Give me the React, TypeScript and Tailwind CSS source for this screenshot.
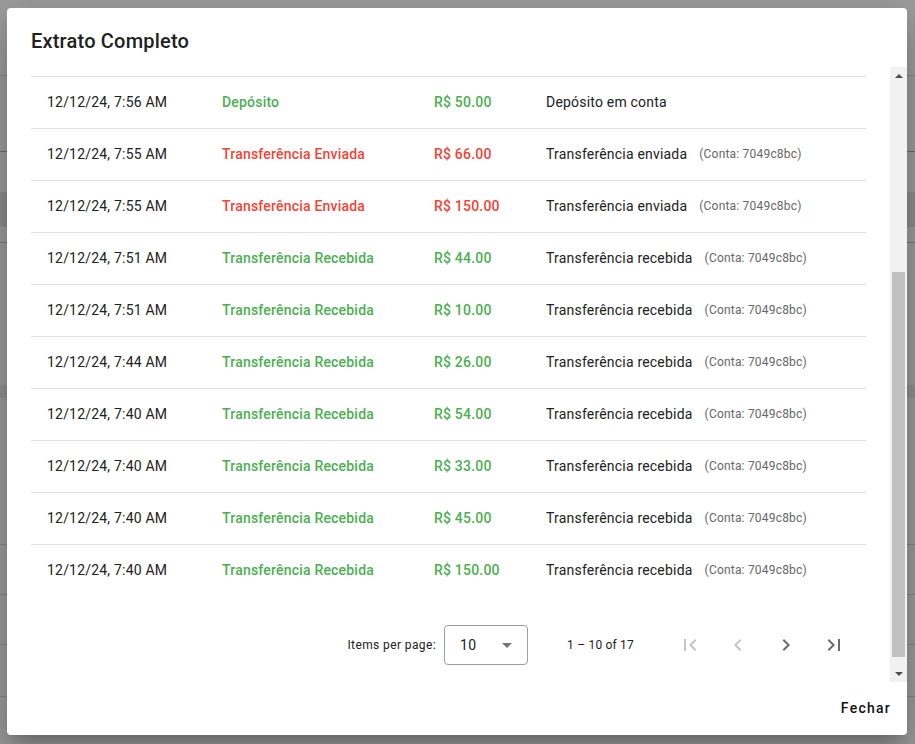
import React from 'react';

type Kind = 'deposito' | 'enviada' | 'recebida';

const rows: { date: string; kind: Kind; amount: string; conta?: boolean }[] = [
  { date: '12/12/24, 7:56 AM', kind: 'deposito', amount: 'R$ 50.00' },
  { date: '12/12/24, 7:55 AM', kind: 'enviada', amount: 'R$ 66.00', conta: true },
  { date: '12/12/24, 7:55 AM', kind: 'enviada', amount: 'R$ 150.00', conta: true },
  { date: '12/12/24, 7:51 AM', kind: 'recebida', amount: 'R$ 44.00', conta: true },
  { date: '12/12/24, 7:51 AM', kind: 'recebida', amount: 'R$ 10.00', conta: true },
  { date: '12/12/24, 7:44 AM', kind: 'recebida', amount: 'R$ 26.00', conta: true },
  { date: '12/12/24, 7:40 AM', kind: 'recebida', amount: 'R$ 54.00', conta: true },
  { date: '12/12/24, 7:40 AM', kind: 'recebida', amount: 'R$ 33.00', conta: true },
  { date: '12/12/24, 7:40 AM', kind: 'recebida', amount: 'R$ 45.00', conta: true },
  { date: '12/12/24, 7:40 AM', kind: 'recebida', amount: 'R$ 150.00', conta: true },
];

const labels: Record<Kind, { type: string; desc: string }> = {
  deposito: { type: 'Depósito', desc: 'Depósito em conta' },
  enviada: { type: 'Transferência Enviada', desc: 'Transferência enviada' },
  recebida: { type: 'Transferência Recebida', desc: 'Transferência recebida' },
};

// material icon paths
const icons = {
  first: 'M18.41 16.59L13.82 12l4.59-4.59L17 6l-6 6 6 6zM6 6h2v12H6z',
  prev: 'M15.41 7.41L14 6l-6 6 6 6 1.41-1.41L10.83 12z',
  next: 'M10 6L8.59 7.41 13.17 12l-4.58 4.59L10 18l6-6z',
  last: 'M5.59 7.41L10.18 12l-4.59 4.59L7 18l6-6-6-6zM16 6h2v12h-2z',
};

function PageButton({ d, disabled }: { d: string; disabled?: boolean }) {
  return (
    <button className="flex h-12 w-12 items-center justify-center">
      <svg width="24" height="24" viewBox="0 0 24 24" className={disabled ? 'fill-[#c4c4c4]' : 'fill-[#6b6b6b]'}>
        <path d={d} />
      </svg>
    </button>
  );
}

function FakeScrollbar() {
  return (
    <div className="flex w-[17px] flex-col bg-[#f1f1f1]">
      <div className="flex h-[17px] items-center justify-center">
        <div className="h-0 w-0 border-x-[4px] border-b-[4px] border-x-transparent border-b-[#505050]" />
      </div>
      <div className="flex flex-1 flex-col px-[2px]">
        <div className="h-[188px]" />
        <div className="h-[385px] bg-[#c1c1c1]" />
      </div>
      <div className="flex h-[17px] items-center justify-center">
        <div className="h-0 w-0 border-x-[4px] border-t-[4px] border-x-transparent border-t-[#505050]" />
      </div>
    </div>
  );
}

export default function App() {
  return (
    <div className="relative h-[744px] w-[915px] overflow-hidden bg-[#9e9e9e] font-['Roboto',sans-serif]">
      {/* dimmed page behind the dialog */}
      <div className="flex h-full flex-col">
        <div className="h-[26px]" />
        <div className="h-[50px] border-b border-[#8a8a8a] bg-[#a0a0a0]" />
        <div className="h-[76px] border-b border-[#6e6e6e] bg-[#9e9e9e]" />
        <div className="h-[40px]" />
        <div className="h-[35px] bg-[#8f8f8f]" />
        <div className="h-[16px] border-b border-[#7a7a7a]" />
        <div className="h-[142px]" />
        <div className="h-[13px] bg-[#939393]" />
        <div className="h-[146px]" />
        <div className="h-[50px] border-t border-[#888888]" />
        <div className="h-[50px] border-t border-[#888888]" />
        <div className="h-[52px] border-t border-[#888888]" />
        <div className="flex-1 border-t border-[#888888]" />
      </div>

      <div className="absolute inset-0 flex justify-start pt-2 pl-[7px]">
        <div className="flex h-[727px] w-[900px] flex-col rounded bg-white shadow-[0_11px_15px_-7px_rgba(0,0,0,0.2),0_24px_38px_3px_rgba(0,0,0,0.14),0_9px_46px_8px_rgba(0,0,0,0.12)]">
          <h2 className="px-6 pt-[17px] pb-[10px] text-[20px] leading-8 font-medium tracking-[0.2px] text-[#212121]">
            Extrato Completo
          </h2>

          <div className="flex h-[615px]">
            <div className="flex flex-1 flex-col overflow-hidden px-6 tracking-[0.2px]">
              <div className="h-[10px] shrink-0 border-b border-[#e0e0e0]" />
              {rows.map((r, i) => {
                const l = labels[r.kind];
                const color = r.kind === 'enviada' ? 'text-[#f44336]' : 'text-[#4caf50]';
                const last = i === rows.length - 1;
                return (
                  <div
                    key={i}
                    className={`grid h-[52px] shrink-0 grid-cols-[175px_212px_112px_1fr] items-center pb-[2px] text-sm text-[#212121] ${last ? '' : 'border-b border-[#e0e0e0]'}`}
                  >
                    <div className="pl-4">{r.date}</div>
                    <div className={`pl-4 font-medium ${color}`}>{l.type}</div>
                    <div className={`pl-4 font-medium ${color}`}>{r.amount}</div>
                    <div className="flex items-center pl-4">
                      <span>{l.desc}</span>
                      {r.conta && <span className="ml-3 text-xs text-[#666666]">(Conta: 7049c8bc)</span>}
                    </div>
                  </div>
                );
              })}

              <div className="mt-5 flex h-14 shrink-0 items-center justify-end pr-2 text-xs text-[#212121]">
                <span className="mr-2 tracking-[0.4px]">Items per page:</span>
                <div className="flex h-10 w-[84px] items-center justify-between rounded border border-[#9e9e9e] pr-[15px] pl-[15px] text-sm">
                  <span>10</span>
                  <div className="h-0 w-0 border-x-[5px] border-t-[5px] border-x-transparent border-t-[#757575]" />
                </div>
                <span className="mr-8 ml-[39px]">1 – 10 of 17</span>
                <PageButton d={icons.first} disabled />
                <PageButton d={icons.prev} disabled />
                <PageButton d={icons.next} />
                <PageButton d={icons.last} />
              </div>
            </div>
            <FakeScrollbar />
          </div>

          <div className="flex flex-1 items-center justify-end pr-2 pb-[2px]">
            <button className="h-9 px-2 text-sm font-medium tracking-[1.25px] text-[#111111]">Fechar</button>
          </div>
        </div>
      </div>
    </div>
  );
}
